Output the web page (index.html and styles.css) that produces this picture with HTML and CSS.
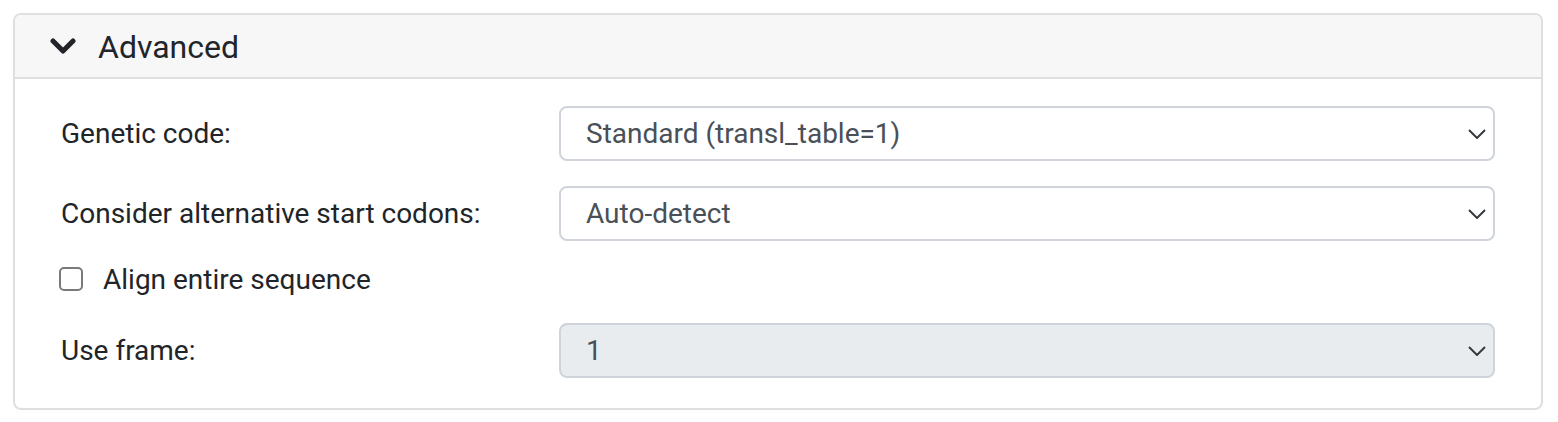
FILE: index.html
```html
<!DOCTYPE html>
<html>
<head>
<meta charset="utf-8">
<link rel="stylesheet" href="styles.css">
</head>
<body>
<div class="card">
  <div class="card-header">
    <svg class="chev" width="26" height="18" viewBox="0 0 26 18"><polyline points="3,3 13,13 23,3" fill="none" stroke="#212529" stroke-width="5" stroke-linecap="round" stroke-linejoin="round"/></svg>
    <span class="title">Advanced</span>
  </div>
  <div class="card-body">
    <div class="row">
      <label class="label">Genetic code:</label>
      <div class="select"><span>Standard (transl_table=1)</span><svg class="arr" width="18" height="10" viewBox="0 0 18 10"><polyline points="1,1 9,9 17,1" fill="none" stroke="#343a40" stroke-width="2"/></svg></div>
    </div>
    <div class="row">
      <label class="label">Consider alternative start codons:</label>
      <div class="select"><span>Auto-detect</span><svg class="arr" width="18" height="10" viewBox="0 0 18 10"><polyline points="1,1 9,9 17,1" fill="none" stroke="#343a40" stroke-width="2"/></svg></div>
    </div>
    <div class="check-row">
      <span class="box"></span>
      <span class="check-label">Align entire sequence</span>
    </div>
    <div class="row">
      <label class="label">Use frame:</label>
      <div class="select disabled"><span>1</span><svg class="arr" width="18" height="10" viewBox="0 0 18 10"><polyline points="1,1 9,9 17,1" fill="none" stroke="#343a40" stroke-width="2"/></svg></div>
    </div>
  </div>
</div>
</body>
</html>
```
FILE: styles.css
```css
html, body { margin: 0; padding: 0; background: #fff; }
body { padding: 13px 15px 0 13px; font-family: Roboto, "Noto Sans", sans-serif; color: #212529; }
.card {
  border: 2px solid #dfdfdf;
  border-radius: 8px;
  overflow: hidden;
  width: 1526px;
}
.card-header {
  background: #f7f7f7;
  border-bottom: 2px solid #dfdfdf;
  height: 64px;
  display: flex;
  align-items: center;
  padding-left: 35px;
  box-sizing: border-box;
}
.chev { margin-right: 22px; margin-top: 1px; }
.title { font-size: 32px; line-height: 1; color: #212529; margin-top: 2px; }
.card-body {
  padding: 27px 46px 30px 44px;
  display: flex;
  flex-direction: column;
}
.row {
  display: grid;
  grid-template-columns: 1fr 2fr;
  column-gap: 32px;
  align-items: center;
}
.row + .row { margin-top: 25px; }
.label { font-size: 28px; padding-left: 2px; }
.select {
  height: 55px;
  box-sizing: border-box;
  border: 2px solid #ced4da;
  border-radius: 8px;
  display: flex;
  align-items: center;
  justify-content: space-between;
  padding: 0 7px 0 25px;
  font-size: 28px;
  color: #495057;
  background: #fff;
}
.select.disabled { background: #e9ecef; }
.check-row {
  display: flex;
  align-items: center;
  height: 26px;
  margin: 25px 0 31px 0;
}
.box {
  width: 24px; height: 24px; box-sizing: border-box;
  border: 2px solid #7a7a7a;
  border-radius: 5px;
  margin-right: 20px;
}
.check-label { font-size: 28px; }
```
